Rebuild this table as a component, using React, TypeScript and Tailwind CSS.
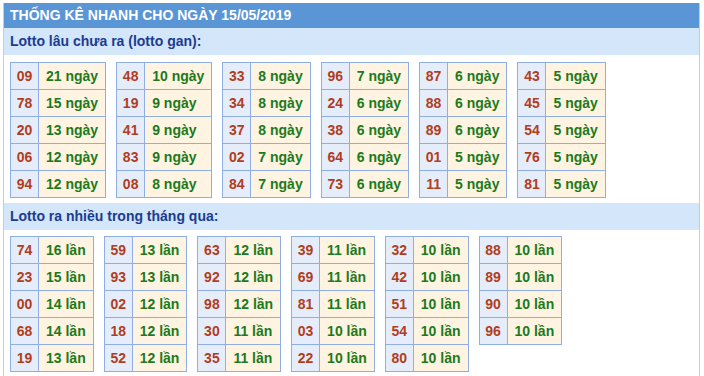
import React from 'react';

type Row = [string, number];

const ganTables: Row[][] = [
  [['09', 21], ['78', 15], ['20', 13], ['06', 12], ['94', 12]],
  [['48', 10], ['19', 9], ['41', 9], ['83', 9], ['08', 8]],
  [['33', 8], ['34', 8], ['37', 8], ['02', 7], ['84', 7]],
  [['96', 7], ['24', 6], ['38', 6], ['64', 6], ['73', 6]],
  [['87', 6], ['88', 6], ['89', 6], ['01', 5], ['11', 5]],
  [['43', 5], ['45', 5], ['54', 5], ['76', 5], ['81', 5]],
];

const hotTables: Row[][] = [
  [['74', 16], ['23', 15], ['00', 14], ['68', 14], ['19', 13]],
  [['59', 13], ['93', 13], ['02', 12], ['18', 12], ['52', 12]],
  [['63', 12], ['92', 12], ['98', 12], ['30', 11], ['35', 11]],
  [['39', 11], ['69', 11], ['81', 11], ['03', 10], ['22', 10]],
  [['32', 10], ['42', 10], ['51', 10], ['54', 10], ['80', 10]],
  [['88', 10], ['89', 10], ['90', 10], ['96', 10]],
];

function StatTable({ rows, unit }: { rows: Row[]; unit: string }) {
  return (
    <div className="inline-grid grid-cols-[auto_auto] border-l border-t border-[#8eaee4]">
      {rows.map(([num, count]) => (
        <React.Fragment key={num}>
          <div className="w-[28px] h-[27px] flex items-center justify-center bg-[#e5edfb] border-r border-b border-[#8eaee4] text-[#b13d1c]">
            {num}
          </div>
          <div className="h-[27px] flex items-center px-[7px] bg-[#fff3e1] border-r border-b border-[#8eaee4] text-[#1c7a1c]">
            {count} {unit}
          </div>
        </React.Fragment>
      ))}
    </div>
  );
}

function SubHeader({ children }: { children: React.ReactNode }) {
  return (
    <div className="h-[27px] flex items-center px-[6px] bg-[#d4e6f9] text-[#1b3c91] text-[14px] font-bold">
      {children}
    </div>
  );
}

export default function App() {
  return (
    <div className="w-[704px] h-[376px] overflow-hidden bg-white pt-[3px] pl-[3px] font-['Liberation_Sans',Arial,sans-serif]">
      <div className="w-[697px] border-x border-[#c9ccd1] min-h-[400px]">
        <div className="h-[25px] flex items-center px-[6px] bg-[#5a95d6] text-white text-[14px] font-bold">
          THỐNG KÊ NHANH CHO NGÀY 15/05/2019
        </div>
        <SubHeader>Lotto lâu chưa ra (lotto gan):</SubHeader>
        <div className="flex items-start gap-[10px] px-[6px] pt-[7px] pb-[5px] text-[14px] font-bold">
          {ganTables.map((rows, i) => (
            <StatTable key={i} rows={rows} unit="ngày" />
          ))}
        </div>
        <SubHeader>Lotto ra nhiều trong tháng qua:</SubHeader>
        <div className="flex items-start gap-[10px] px-[6px] pt-[6px] pb-[6px] text-[14px] font-bold">
          {hotTables.map((rows, i) => (
            <StatTable key={i} rows={rows} unit="lần" />
          ))}
        </div>
      </div>
    </div>
  );
}
